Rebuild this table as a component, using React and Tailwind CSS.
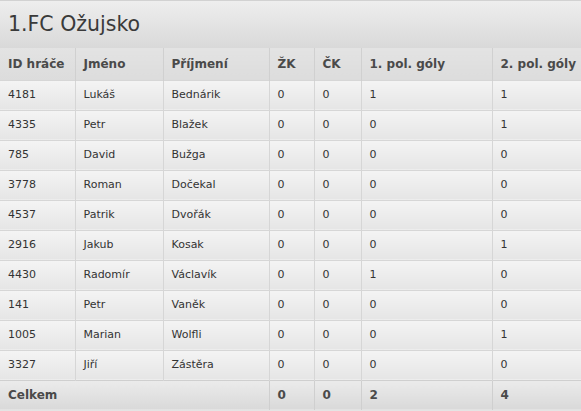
const players = [
  ['4181', 'Lukáš', 'Bednárik', 0, 0, 1, 1],
  ['4335', 'Petr', 'Blažek', 0, 0, 0, 1],
  ['785', 'David', 'Bužga', 0, 0, 0, 0],
  ['3778', 'Roman', 'Dočekal', 0, 0, 0, 0],
  ['4537', 'Patrik', 'Dvořák', 0, 0, 0, 0],
  ['2916', 'Jakub', 'Kosak', 0, 0, 0, 1],
  ['4430', 'Radomír', 'Václavík', 0, 0, 1, 0],
  ['141', 'Petr', 'Vaněk', 0, 0, 0, 0],
  ['1005', 'Marian', 'Wolfli', 0, 0, 0, 1],
  ['3327', 'Jiří', 'Zástěra', 0, 0, 0, 0],
];

const headers = ['ID hráče', 'Jméno', 'Příjmení', 'ŽK', 'ČK', '1. pol. góly', '2. pol. góly'];
const widths = ['w-[75px]', 'w-[88px]', 'w-[106px]', 'w-[45px]', 'w-[47px]', 'w-[131px]', 'w-[93px]'];

export default function App() {
  return (
    <div className="w-[581px] h-[411px] overflow-hidden bg-[#e4e4e4] text-[#333]" style={{ fontFamily: '"DejaVu Sans", Verdana, sans-serif' }}>
      {/* title bar */}
      <div className="h-[48px] border-t border-[#d2d2d2] bg-gradient-to-b from-[#eeeeee] to-[#d9d9d9] flex items-center pl-[8px]">
        <h1 className="text-[20.5px] text-[#3a3a3a] leading-none">1.FC Ožujsko</h1>
      </div>

      <table className="w-[585px] border-collapse table-fixed">
        <thead>
          <tr>
            {headers.map((h, i) => (
              <th
                key={h}
                className={`${widths[i]} h-[32px] text-left pl-[8px] pt-[1px] font-bold text-[12px] text-[#4a4a4a] bg-gradient-to-b from-[#e3e3e3] to-[#dcdcdc] border-l border-[#d0d0d0] first:border-l-0 whitespace-nowrap`}
              >
                {h}
              </th>
            ))}
          </tr>
        </thead>
        <tbody>
          {players.map((p) => (
            <tr key={p[0]}>
              {p.map((v, i) => (
                <td
                  key={i}
                  className="h-[30px] pl-[8px] text-[11px] bg-gradient-to-b from-[#f4f4f4] to-[#e5e5e5] border-t border-l border-[#d6d6d6] first:border-l-0 whitespace-nowrap"
                >
                  {v}
                </td>
              ))}
            </tr>
          ))}
        </tbody>
        <tfoot>
          <tr>
            <td colSpan={3} className="h-[30px] pl-[8px] text-[12px] font-bold text-[#4a4a4a] bg-gradient-to-b from-[#ebebeb] to-[#d9d9d9] border-t border-[#cfcfcf]">
              Celkem
            </td>
            {[0, 0, 2, 4].map((v, i) => (
              <td key={i} className="h-[30px] pl-[8px] text-[12px] font-bold text-[#4a4a4a] bg-gradient-to-b from-[#ebebeb] to-[#d9d9d9] border-t border-l border-[#cfcfcf]">
                {v}
              </td>
            ))}
          </tr>
        </tfoot>
      </table>
    </div>
  );
}
